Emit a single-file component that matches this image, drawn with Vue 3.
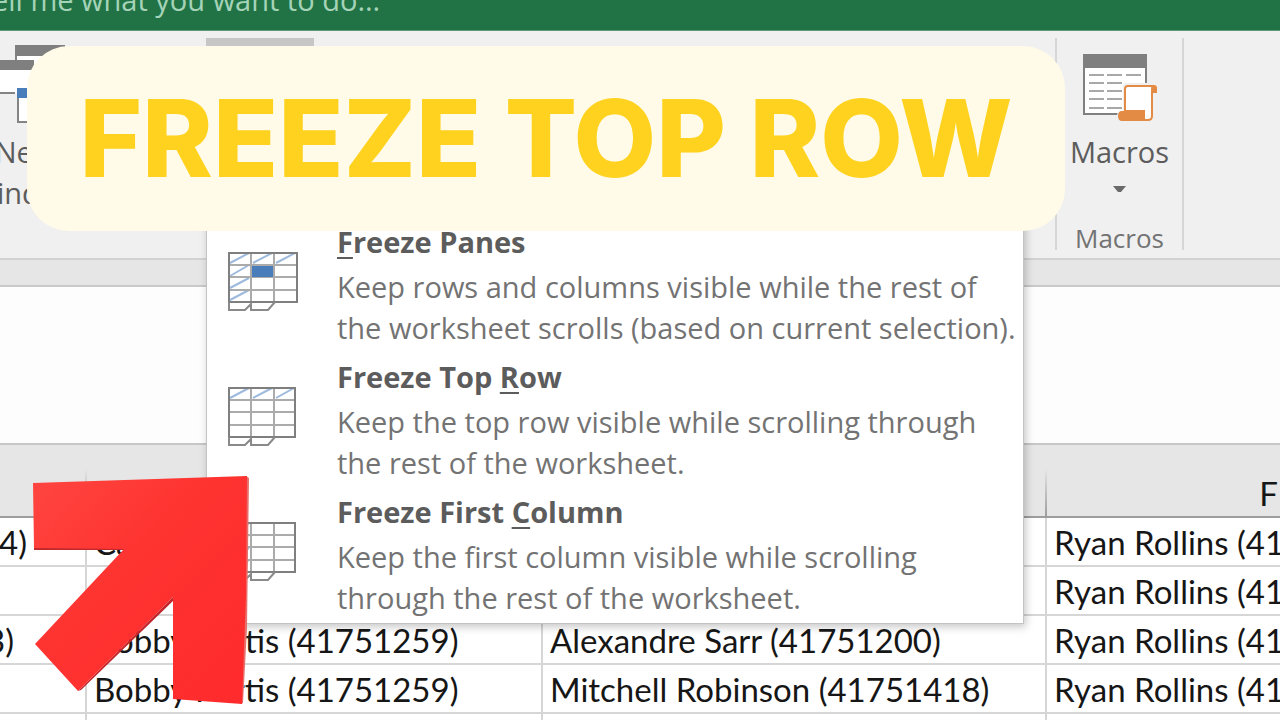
<script setup>
const menu = [
  {
    id: 'panes',
    before: '', key: 'F', after: 'reeze Panes',
    lines: ['Keep rows and columns visible while the rest of', 'the worksheet scrolls (based on current selection).'],
    hatch: ['M2 11 21 1', 'M25 11 44 1', 'M48 11 67 1', 'M2 24 21 13', 'M2 36 21 26', 'M2 48 21 38'],
    selected: true,
    right: 69
  },
  {
    id: 'row',
    before: 'Freeze Top ', key: 'R', after: 'ow',
    lines: ['Keep the top row visible while scrolling through', 'the rest of the worksheet.'],
    hatch: ['M2 11 21 1', 'M25 11 44 1', 'M48 11 66 1'],
    selected: false,
    right: 67
  },
  {
    id: 'column',
    before: 'Freeze First ', key: 'C', after: 'olumn',
    lines: ['Keep the first column visible while scrolling', 'through the rest of the worksheet.'],
    hatch: ['M2 11 21 1', 'M2 24 21 13', 'M2 36 21 26', 'M2 48 21 38'],
    selected: false,
    right: 67
  }
]

const rows = [
  { d: '4)', e: 'Ca', f: '', g: 'Ryan Rollins (41751233)' },
  { d: '', e: '', f: '', g: 'Ryan Rollins (41751233)' },
  { d: '3)', e: 'Bobby Portis (41751259)', f: 'Alexandre Sarr (41751200)', g: 'Ryan Rollins (41751233)' },
  { d: '', e: 'Bobby Portis (41751259)', f: 'Mitchell Robinson (41751418)', g: 'Ryan Rollins (41751233)' },
  { d: '', e: '', f: '', g: '' }
]
</script>

<template>
  <div class="window">
    <header class="titlebar">
      <span class="tell">Tell me what you want to do...</span>
    </header>

    <nav class="ribbon">
      <div class="group views">
        <button class="tool new-window" type="button">
          <svg width="90" height="85" viewBox="0 0 90 85" aria-hidden="true">
            <path d="M31 8h48v40H31z" fill="#fff" stroke="#848484" stroke-width="2" />
            <path d="M30 7h50v11H30z" fill="#7f7f7f" />
            <path d="M0 22h48v33H0z" fill="#fff" />
            <path d="M0 55h30M48 22v10" stroke="#848484" stroke-width="2" />
            <path d="M0 22h49v10H0z" fill="#7f7f7f" />
            <path d="M33 51h30v33H33z" fill="#fff" stroke="#848484" stroke-width="2" />
            <path d="M32 50h32v10H32z" fill="#4a7ebb" />
          </svg>
          <span>New<br>Window</span>
        </button>
        <button class="tool freeze" type="button" aria-label="Freeze options" aria-expanded="true"></button>
      </div>
      <div class="group macros">
        <button class="tool" type="button">
          <svg width="76" height="70" viewBox="0 0 76 70" aria-hidden="true">
            <path d="M2 2h62v59H2z" fill="#fff" stroke="#7f7f7f" stroke-width="2" />
            <path d="M1 1h64v14H1z" fill="#7f7f7f" />
            <path d="M7 22h15M25 22h15M44 22h15M7 30h15M25 30h15M7 38h15M25 38h15M7 46h15M25 46h15M7 55h15M25 55h15" stroke="#a8a8a8" stroke-width="2" />
            <path d="M63 30H44q-3 0-3 4v24h-3q-3 1-3 5v6h37V40h5V29z" fill="#f0f0f0" />
            <path d="M46 33h26q-2 1-2 5v25q0 4-4 4h-4V58H43V36q0-3 3-3z" fill="#fff" stroke="#e38b45" stroke-width="2" />
            <path d="M69 32h3q3 0 3 3v5h-5z" fill="#e38b45" />
            <path d="M40 58h22v5q0 3 3 5H40q-4 0-4-5t4-5z" fill="#e38b45" />
          </svg>
          <span>Macros</span>
          <svg class="caret" width="13" height="7" viewBox="0 0 13 7" aria-hidden="true"><path d="M0 0h13L8 6H5z" fill="#6a6a6a" /></svg>
        </button>
        <span class="caption">Macros</span>
      </div>
    </nav>

    <div class="strip"></div>
    <div class="formula"></div>

    <table class="sheet">
      <colgroup><col class="c-d"><col class="c-e"><col class="c-f"><col class="c-g"></colgroup>
      <thead>
        <tr><th></th><th></th><th></th><th>F</th></tr>
      </thead>
      <tbody>
        <tr v-for="(r, i) in rows" :key="i">
          <td :class="['tail', { short: i === 2 }]"><span>{{ r.d }}</span></td>
          <td>{{ r.e }}</td>
          <td>{{ r.f }}</td>
          <td>{{ r.g }}</td>
        </tr>
      </tbody>
    </table>

    <div class="menu">
      <button v-for="m in menu" :key="m.id" class="item" type="button">
        <svg class="sheet-icon" width="72" height="62" viewBox="0 0 72 62" fill="none" aria-hidden="true">
          <path v-for="h in m.hatch" :key="h" :d="h" stroke="#9db9dc" stroke-width="2" />
          <path :d="`M1 13H${m.right}M1 25H${m.right}M1 38H${m.right}M23 1V50M46 1V50`" stroke="#ababab" stroke-width="2" />
          <path v-if="m.selected" d="M24 14h21v11H24z" fill="#4a7ebb" />
          <path :d="`M1 1H${m.right}V50H1z`" stroke="#7f7f7f" stroke-width="2" />
          <path d="M1 50v8h16l6-6v6h17l7-8" stroke="#8a8a8a" stroke-width="2" />
        </svg>
        <span class="copy">
          <strong>{{ m.before }}<u>{{ m.key }}</u>{{ m.after }}</strong>
          <span v-for="l in m.lines" :key="l">{{ l }}</span>
        </span>
      </button>
    </div>

    <h1 class="banner">FREEZE TOP ROW</h1>

    <svg class="arrow" width="220" height="232" viewBox="0 0 220 232" aria-hidden="true">
      <defs>
        <linearGradient id="red" x1="0" y1="0" x2="1" y2="1">
          <stop offset="0" stop-color="#ff4540" />
          <stop offset=".4" stop-color="#fe3431" />
          <stop offset="1" stop-color="#ff2a2c" />
        </linearGradient>
      </defs>
      <path d="M214 1l3 2-2 150-4 75-3 1z" fill="#e8706c" />
      <path d="M2 73h90v2H2zM46 216l3-1 92-89v-4z" fill="#c2272b" />
      <path d="M1 8 215 1 214 120 210 229 141 224V122L46 216 3 169 92 74 2 73z" fill="url(#red)" />
    </svg>
  </div>
</template>

<style>
body { margin: 0; }
</style>

<style scoped>
.window {
  position: relative;
  height: 100vh;
  overflow: hidden;
  background: #fdfdfd;
  font-family: "Open Sans", "Noto Sans", sans-serif;
  color: #5c5c5c;
}
button {
  border: 0;
  padding: 0;
  background: none;
  font: inherit;
  color: inherit;
}
svg { display: block; }
.titlebar {
  display: flex;
  align-items: flex-end;
  height: 30px;
  border-bottom: 1px solid #5d9877;
  background: #217346;
}
.tell {
  margin-left: -24px;
  padding-bottom: 10px;
  font-size: 29px;
  line-height: 40px;
  color: #a5d3b8;
  white-space: nowrap;
}
.ribbon {
  display: flex;
  box-sizing: border-box;
  height: 229px;
  padding: 7px 0 8px;
  border-bottom: 2px solid #d2d2d2;
  background: #f0f0f0;
}
.group {
  display: flex;
  box-sizing: border-box;
  border-right: 2px solid #d6d6d6;
}
.views {
  flex: 0 0 1057px;
  gap: 131px;
}
.tool {
  display: flex;
  flex-direction: column;
  align-items: center;
  font-size: 29px;
  line-height: 41px;
}
.new-window {
  width: 100px;
  margin-left: -25px;
}
.new-window svg {
  align-self: flex-end;
  margin-bottom: 8px;
}
.freeze {
  width: 108px;
  background: #c6c6c6;
}
.macros {
  flex: 0 0 127px;
  flex-direction: column;
  align-items: center;
  padding-top: 15px;
}
.macros .tool svg { margin-bottom: 8px; }
.macros .caret { margin-top: 14px; }
.caption {
  margin-top: 17px;
  font-size: 26px;
  line-height: 40px;
  color: #737373;
}
.strip {
  height: 25px;
  border-bottom: 2px solid #c9c9c9;
  background: #e6e6e6;
}
.formula { height: 156px; }
.sheet {
  width: 1490px;
  table-layout: fixed;
  border-collapse: separate;
  border-spacing: 0;
  background: #fff;
  font-family: Lato, "Open Sans", sans-serif;
  font-size: 33px;
  line-height: 48px;
  color: #161616;
}
.c-d { width: 87px; }
.c-e { width: 456px; }
.c-f { width: 504px; }
.c-g { width: 443px; }
th {
  box-sizing: border-box;
  height: 75px;
  padding: 24px 0 0;
  border-top: 2px solid #c6c6c6;
  border-bottom: 2px solid #9d9d9d;
  background: linear-gradient(#e6e6e6, #9d9d9d) right bottom / 2px 48px no-repeat #e6e6e6;
  font-weight: 400;
  line-height: 46px;
}
td {
  box-sizing: border-box;
  height: 49px;
  padding: 1px 0 0 7px;
  border-right: 2px solid #d6d6d6;
  border-bottom: 2px solid #d6d6d6;
  line-height: 44px;
  white-space: nowrap;
  overflow: hidden;
}
.tail {
  padding: 1px 60px 0 0;
  direction: rtl;
}
.tail span {
  direction: ltr;
  unicode-bidi: isolate;
}
.short { padding-right: 73px; }
.menu {
  position: absolute;
  top: 213px;
  left: 206px;
  width: 816px;
  padding-top: 4px;
  border: 1px solid #c3c3c3;
  background: #fff;
  box-shadow: 2px 3px 8px rgba(0, 0, 0, .22);
}
.item {
  display: flex;
  gap: 37px;
  width: 100%;
  padding: 0 0 5px 21px;
  text-align: left;
}
.sheet-icon {
  flex: none;
  margin-top: 34px;
}
.copy {
  display: flex;
  flex-direction: column;
  font-size: 29px;
  line-height: 41px;
  color: #737373;
  white-space: nowrap;
}
.copy strong {
  font-weight: 700;
  line-height: 48px;
  color: #5c5c5c;
}
.copy u {
  text-decoration-thickness: 2px;
  text-underline-offset: 4px;
}
.banner {
  position: absolute;
  top: 46px;
  left: 27px;
  right: 215px;
  box-sizing: border-box;
  margin: 0;
  border-radius: 42px;
  background: #fffbe8;
  font-family: Inter, sans-serif;
  font-size: 107px;
  font-weight: 800;
  line-height: 185px;
  text-align: center;
  white-space: nowrap;
  color: #ffd220;
}
.arrow {
  position: absolute;
  top: 475px;
  left: 32px;
}
</style>
